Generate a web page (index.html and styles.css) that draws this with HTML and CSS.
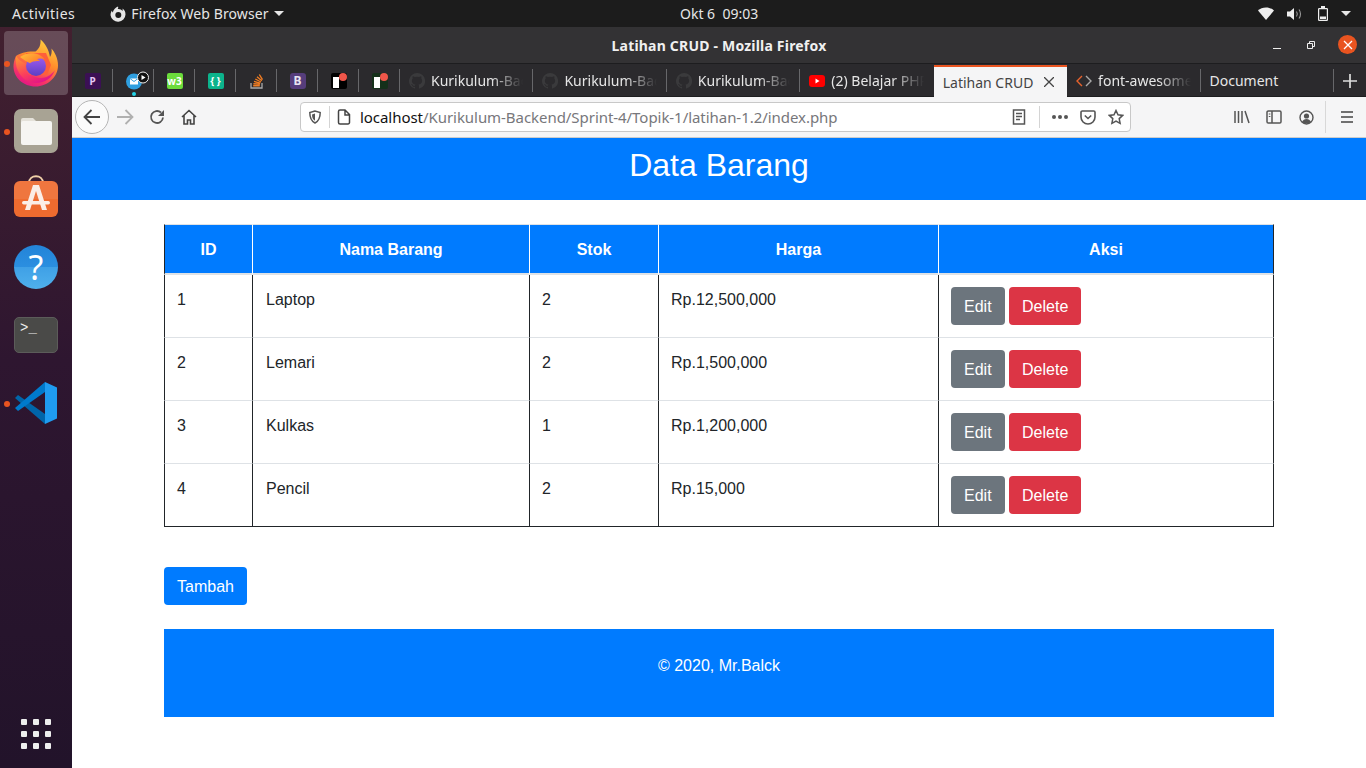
FILE: index.html
```html
<!DOCTYPE html>
<html lang="en">
<head>
  <meta charset="UTF-8">
  <title>Latihan CRUD</title>
  <link rel="stylesheet" href="styles.css">
</head>
<body>

  <svg class="defs" width="0" height="0">
    <defs>
      <linearGradient id="ffOuter" x1="0.75" y1="0" x2="0.3" y2="1">
        <stop offset="0" stop-color="#ffd23f"/>
        <stop offset="0.45" stop-color="#ff8a2b"/>
        <stop offset="0.8" stop-color="#f5316a"/>
        <stop offset="1" stop-color="#e31587"/>
      </linearGradient>
      <linearGradient id="ffGlobe" x1="0.5" y1="0" x2="0.5" y2="1">
        <stop offset="0" stop-color="#a35cf0"/>
        <stop offset="1" stop-color="#5b3fc4"/>
      </linearGradient>
      <linearGradient id="ffFox" x1="0" y1="0" x2="1" y2="0.6">
        <stop offset="0" stop-color="#ffc23a"/>
        <stop offset="1" stop-color="#ff7a2a"/>
      </linearGradient>
      <linearGradient id="ffTail" x1="0" y1="0" x2="0.6" y2="1">
        <stop offset="0" stop-color="#ff9a2e"/>
        <stop offset="0.6" stop-color="#fb3f5c"/>
        <stop offset="1" stop-color="#e31587"/>
      </linearGradient>
    </defs>
    <symbol id="github" viewBox="0 0 16 16">
      <path fill="#3a3a3c" d="M8 0a8 8 0 0 0-2.500 15.600c.4.100.5-.2.5-.4v-1.400c-2.200.5-2.700-1-2.700-1-.4-.9-.9-1.200-.9-1.200-.7-.5.100-.5.100-.5.800.100 1.200.800 1.200.800.700 1.200 1.900.9 2.300.7.100-.5.300-.9.500-1.100-1.800-.2-3.600-.9-3.600-4 0-.9.300-1.600.8-2.100-.1-.2-.4-1 .1-2.100 0 0 .7-.2 2.200.8a7.500 7.500 0 0 1 4 0c1.500-1 2.200-.8 2.200-.8.400 1.100.200 1.900.100 2.100.5.500.8 1.200.8 2.100 0 3.100-1.900 3.800-3.700 4 .3.300.6.800.6 1.500v2.200c0 .2.100.5.600.4A8 8 0 0 0 8 0z"/>
    </symbol>
  </svg>

  <header class="topbar">
    <span class="topbar-item">Activities</span>
    <span class="topbar-app">
      <svg width="18" height="18" viewBox="0 0 18 18"><path fill="#e6e6e6" d="M9 1.500c.4 1 .2 2-.4 2.600 2-.3 4 .4 4.900 2 .3-.8.200-1.800 0-2.500C15.600 5 16.500 7 16.500 9.500A7.500 7.500 0 0 1 1.600 10.400C1.400 8.500 2 6.800 3 5.600c0 1 .3 1.600.8 2 .4-2.600 2.500-5 5.200-6.100z"/><circle cx="9.300" cy="10" r="3" fill="#1c1c1c"/></svg>
      Firefox Web Browser
      <i class="caret"></i>
    </span>
    <span class="clock">Okt 6&nbsp;&nbsp;09:03</span>
    <span class="tray">
      <svg width="16" height="13" viewBox="0 0 16 13"><path fill="#eee" d="M8 13 0 3.600C2 1.600 4.800.4 8 .4s6 1.200 8 3.200z"/></svg>
      <svg class="tray-sound" width="16" height="14" viewBox="0 0 16 14"><path fill="#eee" d="M0 4.500h3L7 1v12L3 9.500H0z"/><path fill="none" stroke="#999" stroke-width="1.100" d="M9.500 4.500c1 1.500 1 3.500 0 5M12 2.500c2 2.500 2 6.500 0 9"/></svg>
      <svg class="tray-batt" width="10" height="15" viewBox="0 0 10 15"><path fill="none" stroke="#eee" stroke-width="1.200" d="M1.200 2.600h7.600a.6.600 0 0 1 .6.600v10.600a.6.600 0 0 1-.6.600H1.200a.6.600 0 0 1-.6-.6V3.200a.6.600 0 0 1 .6-.6z"/><path fill="#eee" d="M3 0h4v2H3zM2 10.500h6V13H2z"/></svg>
      <i class="caret caret-tray"></i>
    </span>
  </header>

  <div class="desktop">
    <aside class="dock">
      <div class="dock-item dock-active">
        <i class="dot"></i>
        <svg width="46" height="48" viewBox="0 0 46 48">
          <path fill="url(#ffOuter)" d="M3 17C1 21 .5 25 .5 27.500.5 38.500 10.500 47.500 22.500 47.500S45 38 45 26.500C45 19 41.500 13 38.500 9.500 39 13 38.500 16 37 18 36 11 32 4 27.500 .5 28 6 26 10 22.500 12.500 14 12 7 14 3 17z"/>
          <path fill="#ff5f3a" d="M13 14h20l5 12-4 10H14z"/>
          <circle cx="23" cy="27" r="10" fill="url(#ffGlobe)"/>
          <path fill="url(#ffTail)" d="M3 17C1 31 10 44 23 44 32 44 39 39 42 31 37 38 30 40 24 38.500 15 37 11 30 13 25 9 23 5 20 3 17z"/>
          <path fill="url(#ffFox)" d="M7 18c4-3 10-4.500 15-3.500 4 .8 8 3 10 6.500-3-1.500-6-1.800-8-.8 2 .5 3 2 3 2-4-.5-8 .3-10 2-3-1.500-7-3.700-10-6.200z"/>
        </svg>
      </div>
      <div class="dock-item">
        <i class="dot"></i>
        <svg width="44" height="44" viewBox="0 0 44 44">
          <rect width="44" height="44" rx="7" fill="#a8a394"/>
          <path fill="#e4e1d9" d="M7 11a2 2 0 0 1 2-2h10l5 5H7z"/>
          <rect x="7" y="12" width="31" height="24" rx="2" fill="#f6f5f2"/>
        </svg>
      </div>
      <div class="dock-item">
        <svg class="icon-store" width="44" height="44" viewBox="0 0 44 44">
          <path fill="none" stroke="#f0d0a8" stroke-width="2" d="M15 8c0-9 14-9 14 0"/>
          <rect y="6" width="44" height="36" rx="6" fill="#ee6b2f"/>
          <path fill="#fff" fill-opacity="0.08" d="M0 24V12a6 6 0 0 1 6-6h32a6 6 0 0 1 6 6v12z"/>
          <path fill="#fbeee6" d="M19 10h6l8 25h-5l-6-19-6 19h-5z"/>
          <rect x="8" y="26" width="28" height="3.500" rx="1.700" fill="#fbeee6"/>
        </svg>
      </div>
      <div class="dock-item">
        <div class="help">?</div>
      </div>
      <div class="dock-item">
        <div class="term">&gt;_</div>
      </div>
      <div class="dock-item">
        <i class="dot"></i>
        <svg width="44" height="44" viewBox="0 0 44 44">
          <path fill="#0065a9" d="M4 14 31 33V43L1 17z"/>
          <path fill="#007acc" d="M31 1V11L4 30 1 27z"/>
          <path fill="#1f9cf0" d="M31 1 43 6.500v31L31 43z"/>
        </svg>
      </div>
      <div class="dock-apps">
        <i></i><i></i><i></i><i></i><i></i><i></i><i></i><i></i><i></i>
      </div>
    </aside>

    <div class="window">
      <div class="titlebar">
        <span class="title">Latihan CRUD - Mozilla Firefox</span>
        <span class="win-buttons">
          <svg width="10" height="10" viewBox="0 0 10 10"><path stroke="#eee" d="M1 8.500h8"/></svg>
          <svg width="10" height="10" viewBox="0 0 10 10"><path fill="none" stroke="#eee" d="M1.500 3.500h5v5h-5zM3.500 3V1.500h5v5H7"/></svg>
          <span class="win-close">
            <svg width="10" height="10" viewBox="0 0 10 10"><path stroke="#fff" stroke-width="1.300" d="M1 1l8 8M9 1 1 9"/></svg>
          </span>
        </span>
      </div>

      <div class="tabbar">
        <div class="pin"><span class="fav fav-pocket">P</span></div>
        <div class="pin">
          <svg class="fav-mail" width="30" height="30" viewBox="0 0 30 30">
            <circle cx="10" cy="15.500" r="8" fill="#2f9fe0"/>
            <path fill="#fff" d="M6 12.500h8v6H6z"/>
            <path fill="none" stroke="#2f9fe0" d="M6 12.500l4 3 4-3"/>
            <circle cx="19" cy="11.500" r="5.500" fill="#111" stroke="#eee"/>
            <path fill="#fff" d="M17.500 9 21.500 11.500l-4 2.500z"/>
            <circle cx="10" cy="28" r="2" fill="#23d3e6"/>
          </svg>
        </div>
        <div class="pin"><span class="fav fav-w3">w3</span></div>
        <div class="pin"><span class="fav fav-braces">{ }</span></div>
        <div class="pin">
          <svg width="16" height="16" viewBox="0 0 16 16"><path fill="none" stroke="#aaa" stroke-width="1.300" d="M2 10v5h11v-5"/><path fill="none" stroke="#f07d23" stroke-width="1.400" d="M4.200 12.800h6.600M4.400 10.700l6.500.6M5 8.400l6.300 1.700M6.300 6l5.700 3M8 3.800l4.800 4M10.300 1.500l3.200 5.200"/></svg>
        </div>
        <div class="pin"><span class="fav fav-boot">B</span></div>
        <div class="pin"><span class="fav fav-patreon"><i></i><b></b></span></div>
        <div class="pin"><span class="fav fav-patreon fav-patreon-alt"><i></i><b></b></span></div>

        <div class="tab"><svg class="tab-icon" width="16" height="16"><use href="#github"/></svg><span class="tab-label">Kurikulum-Bac</span></div>
        <div class="tab"><svg class="tab-icon" width="16" height="16"><use href="#github"/></svg><span class="tab-label">Kurikulum-Bac</span></div>
        <div class="tab"><svg class="tab-icon" width="16" height="16"><use href="#github"/></svg><span class="tab-label">Kurikulum-Bac</span></div>
        <div class="tab">
          <svg class="tab-icon" width="16" height="12" viewBox="0 0 16 12"><rect width="16" height="12" rx="3" fill="#f00"/><path fill="#fff" d="M6.500 3.500 10.500 6l-4 2.500z"/></svg>
          <span class="tab-label">(2) Belajar PHP</span>
        </div>
        <div class="tab tab-active">
          <span class="tab-label">Latihan CRUD</span>
          <svg width="10" height="10" viewBox="0 0 10 10"><path stroke="#444" stroke-width="1.300" d="M0 0l10 10M10 0 0 10"/></svg>
        </div>
        <div class="tab">
          <svg class="tab-icon" width="16" height="12" viewBox="0 0 16 12"><path fill="none" stroke="#e8622c" stroke-width="1.400" d="M6 1 1 6l5 5"/><path fill="none" stroke="#aaa" stroke-width="1.400" d="M10 1l5 5-5 5"/></svg>
          <span class="tab-label">font-awesome</span>
        </div>
        <div class="tab"><span class="tab-label tab-label-full">Document</span></div>
        <div class="tab-new">
          <svg width="14" height="14" viewBox="0 0 14 14"><path stroke="#ddd" stroke-width="1.700" d="M7 0v14M0 7h14"/></svg>
        </div>
      </div>

      <nav class="navbar">
        <span class="nav-back">
          <svg width="18" height="16" viewBox="0 0 18 16"><path fill="none" stroke="#444" stroke-width="1.800" d="M8.500 1 1.500 8l7 7M2 8h15"/></svg>
        </span>
        <span class="nav-btn">
          <svg width="18" height="16" viewBox="0 0 18 16"><path fill="none" stroke="#b0b0b0" stroke-width="1.800" d="M9.500 1l7 7-7 7M16 8H1"/></svg>
        </span>
        <span class="nav-btn">
          <svg width="16" height="16" viewBox="0 0 16 16"><path fill="none" stroke="#555" stroke-width="1.800" d="M14 8.500A6 6 0 1 1 12 3.500"/><path fill="#555" d="M15 1v6H9z"/></svg>
        </span>
        <span class="nav-btn">
          <svg width="16" height="16" viewBox="0 0 16 16"><path fill="none" stroke="#444" stroke-width="1.600" d="M1 8l7-6.500L15 8M3 6.500V15h3.500v-4h3v4H13V6.500"/></svg>
        </span>

        <div class="urlbar">
          <svg class="url-shield" width="14" height="14" viewBox="0 0 14 14"><path fill="none" stroke="#555" stroke-width="1.500" d="M7 1 1.800 2.500C1.800 8 3 11 7 13c4-2 5.200-5 5.200-10.500z"/><path fill="#555" d="M7 3.500 4 4.400C4 7.500 5 9.500 7 10.800z"/></svg>
          <i class="url-sep"></i>
          <svg class="url-page" width="14" height="16" viewBox="0 0 14 16"><path fill="none" stroke="#444" stroke-width="1.500" d="M1.500 2.500a1.500 1.500 0 0 1 1.500-1.500h5l4.500 4.500v8a1.500 1.500 0 0 1-1.500 1.500H3a1.500 1.500 0 0 1-1.500-1.500zM8 1v5h4.500"/></svg>
          <span class="url-text"><b>localhost</b>/Kurikulum-Backend/Sprint-4/Topik-1/latihan-1.2/index.php</span>
          <svg class="url-reader" width="14" height="16" viewBox="0 0 14 16"><path fill="none" stroke="#555" stroke-width="1.500" d="M1.500 1h11v14h-11z"/><path stroke="#555" stroke-width="1.300" d="M4 4.500h6M4 7.500h6M4 10.500h4"/></svg>
          <i class="url-sep url-sep-right"></i>
          <span class="url-dots"><i></i><i></i><i></i></span>
          <svg class="url-pocket" width="16" height="15" viewBox="0 0 16 15"><path fill="none" stroke="#555" stroke-width="1.600" d="M1 2.300A1.300 1.300 0 0 1 2.300 1h11.400A1.300 1.300 0 0 1 15 2.300V7a7 7 0 0 1-14 0z"/><path fill="none" stroke="#555" stroke-width="1.600" d="M4.800 5.500 8 8.500l3.200-3"/></svg>
          <svg class="url-star" width="16" height="16" viewBox="0 0 16 16"><path fill="none" stroke="#555" stroke-width="1.500" d="M8 1.500l2 4.300 4.700.6-3.500 3.200.9 4.700L8 12l-4.100 2.300.9-4.700L1.300 6.400 6 5.800z"/></svg>
        </div>

        <div class="nav-right">
          <svg width="16" height="14" viewBox="0 0 16 14"><path fill="none" stroke="#555" stroke-width="1.500" d="M1 1v12M4.500 1v12M8 1v12M11 1l4 12"/></svg>
          <svg width="16" height="14" viewBox="0 0 16 14"><path fill="none" stroke="#555" stroke-width="1.500" d="M2.300 1h11.400A1.300 1.300 0 0 1 15 2.300v9.400a1.300 1.300 0 0 1-1.300 1.300H2.300A1.300 1.300 0 0 1 1 11.700V2.300A1.300 1.300 0 0 1 2.300 1zM6 1v12"/><path stroke="#555" d="M2.800 4h1.600M2.800 6.500h1.600"/></svg>
          <svg width="15" height="15" viewBox="0 0 15 15"><circle cx="7.500" cy="7.500" r="6.500" fill="none" stroke="#555" stroke-width="1.400"/><circle cx="7.500" cy="6" r="2.600" fill="#555"/><path fill="#555" d="M3 12c.8-2 2.500-3 4.500-3s3.700 1 4.500 3c-1.200 1-2.800 1.500-4.500 1.500S4.200 13 3 12z"/></svg>
          <i class="nav-sep"></i>
          <svg width="12" height="12" viewBox="0 0 12 12"><path stroke="#444" stroke-width="1.600" d="M0 1h12M0 6h12M0 11h12"/></svg>
        </div>
      </nav>

      <main class="page">
        <div class="jumbo">Data Barang</div>

        <div class="container">
          <table class="data-table">
            <colgroup>
              <col class="col-id">
              <col class="col-nama">
              <col class="col-stok">
              <col class="col-harga">
              <col class="col-aksi">
            </colgroup>
            <thead>
              <tr>
                <th>ID</th>
                <th>Nama Barang</th>
                <th>Stok</th>
                <th>Harga</th>
                <th>Aksi</th>
              </tr>
            </thead>
            <tbody>
              <tr>
                <td>1</td>
                <td>Laptop</td>
                <td>2</td>
                <td>Rp.12,500,000</td>
                <td class="cell-actions"><a class="btn btn-edit">Edit</a> <a class="btn btn-delete">Delete</a></td>
              </tr>
              <tr>
                <td>2</td>
                <td>Lemari</td>
                <td>2</td>
                <td>Rp.1,500,000</td>
                <td class="cell-actions"><a class="btn btn-edit">Edit</a> <a class="btn btn-delete">Delete</a></td>
              </tr>
              <tr>
                <td>3</td>
                <td>Kulkas</td>
                <td>1</td>
                <td>Rp.1,200,000</td>
                <td class="cell-actions"><a class="btn btn-edit">Edit</a> <a class="btn btn-delete">Delete</a></td>
              </tr>
              <tr>
                <td>4</td>
                <td>Pencil</td>
                <td>2</td>
                <td>Rp.15,000</td>
                <td class="cell-actions"><a class="btn btn-edit">Edit</a> <a class="btn btn-delete">Delete</a></td>
              </tr>
            </tbody>
          </table>

          <a class="btn btn-add">Tambah</a>

          <footer class="page-footer">&copy; 2020, Mr.Balck</footer>
        </div>
      </main>
    </div>
  </div>

</body>
</html>
```

FILE: styles.css
```css
* {
  box-sizing: border-box;
}

html, body {
  height: 100%;
}

body {
  margin: 0;
  overflow: hidden;
  display: flex;
  flex-direction: column;
  font-family: 'Liberation Sans', Arial, sans-serif;
  background: #fff;
}

.defs {
  position: absolute;
}

svg {
  display: block;
  flex: none;
}

/* gnome top bar */
.topbar {
  height: 27px;
  flex: none;
  display: flex;
  align-items: center;
  background: #1c1c1c;
  color: #e6e6e6;
  font-family: 'Noto Sans', sans-serif;
  font-size: 14px;
  padding-left: 12px;
  position: relative;
}

.topbar-item {
  letter-spacing: 0.5px;
}

.topbar-app {
  display: flex;
  align-items: center;
  gap: 4px;
  margin-left: 34px;
  letter-spacing: 0.1px;
}

.caret {
  width: 0;
  height: 0;
  border-left: 5px solid transparent;
  border-right: 5px solid transparent;
  border-top: 5px solid #e6e6e6;
  margin-left: 1px;
}

.clock {
  position: absolute;
  left: 680px;
}

.tray {
  margin-left: auto;
  display: flex;
  align-items: center;
  margin-right: 15px;
}

.tray-sound {
  margin-left: 13px;
}

.tray-batt {
  margin-left: 15px;
}

.caret-tray {
  margin-left: 13px;
}

.desktop {
  flex: 1;
  display: flex;
  min-height: 0;
}

/* launcher */
.dock {
  width: 72px;
  flex: none;
  display: flex;
  flex-direction: column;
  align-items: center;
  padding-top: 4px;
  background: linear-gradient(180deg, #42202f 0%, #2e1630 45%, #22132a 100%);
}

.dock-item {
  position: relative;
  width: 64px;
  height: 64px;
  margin-bottom: 4px;
  border-radius: 4px;
  display: flex;
  align-items: center;
  justify-content: center;
}

.dock-active {
  background: rgba(255, 255, 255, 0.2);
}

.dot {
  position: absolute;
  left: 0;
  top: 30px;
  width: 6px;
  height: 6px;
  border-radius: 50%;
  background: #e95420;
}

.icon-store {
  margin-bottom: 5px;
}

.help {
  width: 44px;
  height: 44px;
  border-radius: 50%;
  background: linear-gradient(180deg, #2384d8 0%, #2b8fe0 50%, #3fa0e6 50%, #4fb0ec 100%);
  color: #fff;
  font-family: 'Noto Sans', sans-serif;
  font-size: 34px;
  line-height: 44px;
  text-align: center;
}

.term {
  width: 44px;
  height: 36px;
  border-radius: 5px;
  background: #4a4a48;
  border: 1px solid #5c5c5a;
  color: #eee;
  font-family: 'Liberation Mono', monospace;
  font-size: 14px;
  line-height: 14px;
  padding: 3px 0 0 5px;
}

.dock-apps {
  margin-top: auto;
  margin-bottom: 19px;
  display: grid;
  grid-template-columns: repeat(3, 6px);
  gap: 6px;
}

.dock-apps i {
  height: 6px;
  border-radius: 1px;
  background: #eee;
}

/* firefox window */
.window {
  flex: 1;
  min-width: 0;
  display: flex;
  flex-direction: column;
}

.titlebar {
  height: 37px;
  flex: none;
  display: flex;
  align-items: center;
  justify-content: center;
  position: relative;
  background: #333234;
  border-bottom: 1px solid #1d1d1f;
}

.title {
  color: #f0f0f0;
  font-family: 'Noto Sans', sans-serif;
  font-size: 14px;
  font-weight: 700;
  letter-spacing: 0.2px;
}

.win-buttons {
  position: absolute;
  right: 9px;
  top: 8px;
  display: flex;
  align-items: center;
  gap: 24px;
}

.win-close {
  width: 19px;
  height: 19px;
  border-radius: 50%;
  background: #e95420;
  display: flex;
  align-items: center;
  justify-content: center;
  margin-left: -2px;
}

.tabbar {
  height: 33px;
  flex: none;
  display: flex;
  background: #2b2a2d;
  box-shadow: inset 0 -1px #1d1d1f;
  color: #e6e6e6;
  font-family: 'Noto Sans', sans-serif;
  font-size: 14px;
}

.pin {
  width: 41px;
  flex: none;
  position: relative;
  display: flex;
  align-items: center;
  justify-content: center;
}

.pin::after, .tab::after {
  content: "";
  position: absolute;
  right: 0;
  top: 5px;
  height: 23px;
  width: 1px;
  background: #67676a;
}

.fav {
  width: 16px;
  height: 16px;
  border-radius: 2px;
  display: flex;
  align-items: center;
  justify-content: center;
  color: #fff;
  font-size: 10px;
  font-weight: 700;
  line-height: 1;
}

.fav-pocket {
  background: #3b1054;
  color: #e4c8f4;
}

.fav-mail {
  margin-left: 10px;
}

.fav-w3 {
  background: #6bdc3c;
  font-size: 10px;
}

.fav-braces {
  background: #0cb38c;
  font-size: 10px;
}

.fav-boot {
  background: #563d7c;
  border-radius: 3px;
  font-size: 12px;
  color: #e8e4f0;
}

.fav-patreon {
  background: #000;
  position: relative;
}

.fav-patreon i {
  position: absolute;
  left: 2px;
  top: 4px;
  width: 6px;
  height: 11px;
  background: #fff;
}

.fav-patreon b {
  position: absolute;
  right: 0;
  top: 0;
  width: 8px;
  height: 8px;
  border-radius: 50%;
  background: #f0564a;
}

.fav-patreon-alt {
  background: #15301a;
}

.tab {
  width: 133.43px;
  flex: none;
  position: relative;
  display: flex;
  align-items: center;
  padding: 0 10px 0 9px;
  gap: 6px;
  white-space: nowrap;
}

.tab-icon {
  flex: none;
}

.tab-label {
  flex: 1;
  min-width: 0;
  -webkit-mask-image: linear-gradient(90deg, #000 65%, transparent 100%);
  mask-image: linear-gradient(90deg, #000 65%, transparent 100%);
}

.tab-label-full {
  -webkit-mask-image: none;
  mask-image: none;
}

.tab:nth-child(12)::after,
.tab-active::after {
  display: none;
}

.tab-active {
  background: #f5f5f6;
  color: #444;
  border-top: 2px solid #e95420;
  margin-top: 1px;
  gap: 0;
  padding: 0 13px 0 9px;
}

.tab-active .tab-label {
  -webkit-mask-image: none;
  mask-image: none;
}

.tab-new {
  width: 32px;
  flex: none;
  display: flex;
  align-items: center;
  justify-content: center;
}

/* nav bar */
.navbar {
  height: 41px;
  flex: none;
  display: flex;
  align-items: center;
  padding-left: 3px;
  background: #f5f5f6;
  border-bottom: 1px solid #ccc;
}

.nav-back {
  width: 34px;
  height: 34px;
  border-radius: 50%;
  border: 1px solid #b5b5b5;
  background: #fbfbfb;
  display: flex;
  align-items: center;
  justify-content: center;
  flex: none;
}

.nav-btn {
  width: 32px;
  display: flex;
  justify-content: center;
  flex: none;
}

.urlbar {
  width: 831px;
  height: 30px;
  flex: none;
  margin-left: 95px;
  display: flex;
  align-items: center;
  background: #fff;
  border: 1px solid #c8c8c8;
  border-radius: 4px;
  font-family: 'Noto Sans', sans-serif;
  font-size: 15px;
  color: #77777b;
  padding-left: 7px;
}

.url-sep {
  width: 1px;
  height: 22px;
  background: #d4d4d4;
  margin-left: 7px;
}

.url-page {
  margin-left: 7px;
}

.url-text {
  margin-left: 9px;
  flex: 1;
  min-width: 0;
  white-space: nowrap;
  letter-spacing: -0.05px;
}

.url-text b {
  font-weight: 400;
  color: #111;
}

.url-sep-right {
  margin-left: 13px;
}

.url-dots {
  display: flex;
  gap: 2px;
  margin-left: 12px;
}

.url-dots i {
  width: 4px;
  height: 4px;
  border-radius: 50%;
  background: #555;
}

.url-pocket {
  margin-left: 12px;
}

.url-star {
  margin: 0 6px 0 12px;
}

.nav-right {
  flex: 1;
  display: flex;
  align-items: center;
  padding-left: 103px;
}

.nav-right svg:nth-child(2) {
  margin-left: 16px;
}

.nav-right svg:nth-child(3) {
  margin-left: 17px;
}

.nav-sep {
  width: 1px;
  height: 32px;
  background: #d8d8d8;
  margin-left: 11px;
}

.nav-right svg:last-child {
  margin-left: 15px;
}

/* page content */
.page {
  flex: 1;
  min-height: 0;
  background: #fff;
  color: #212529;
  font-size: 16px;
  line-height: 24px;
}

.jumbo {
  height: 62px;
  background: #007bff;
  color: #fff;
  font-size: 32px;
  line-height: 54px;
  text-align: center;
}

.container {
  width: 1110px;
  margin: 24px auto 0;
}

.data-table {
  width: 100%;
  table-layout: fixed;
  border-collapse: separate;
  border-spacing: 0;
}

.col-id { width: 88px; }
.col-nama { width: 277px; }
.col-stok { width: 129px; }
.col-harga { width: 280px; }
.col-aksi { width: 336px; }

.data-table th {
  background: #007bff;
  color: #fff;
  font-weight: 700;
  padding: 13px 12px 11px;
  border-top: 1px solid #dee2e6;
  border-bottom: 2px solid #dee2e6;
  border-left: 1px solid #fff;
  text-align: center;
}

.data-table th:first-child {
  border-left-color: #212529;
}

.data-table th:last-child {
  border-right: 1px solid #212529;
}

.data-table td {
  padding: 13px 12px 11px;
  vertical-align: top;
  border-top: 1px solid #dee2e6;
  border-left: 1px solid #212529;
}

.data-table td:nth-child(2) {
  padding-left: 13px;
}

.data-table td.cell-actions {
  padding: 12px;
  border-right: 1px solid #212529;
}

.data-table tbody tr:first-child td {
  border-top: 0;
}

.data-table tbody tr:last-child td {
  border-bottom: 1px solid #212529;
}

.btn {
  display: inline-block;
  padding: 7px 12px 5px;
  border: 1px solid transparent;
  border-radius: 4px;
  color: #fff;
  font-size: 16px;
  line-height: 24px;
  vertical-align: middle;
  cursor: pointer;
}

.btn-edit {
  background: #6c757d;
}

.btn-delete {
  background: #dc3545;
}

.btn-add {
  background: #007bff;
  margin-top: 40px;
}

.page-footer {
  height: 88px;
  margin-top: 24px;
  padding-top: 25px;
  background: #007bff;
  color: #fff;
  text-align: center;
}
```
